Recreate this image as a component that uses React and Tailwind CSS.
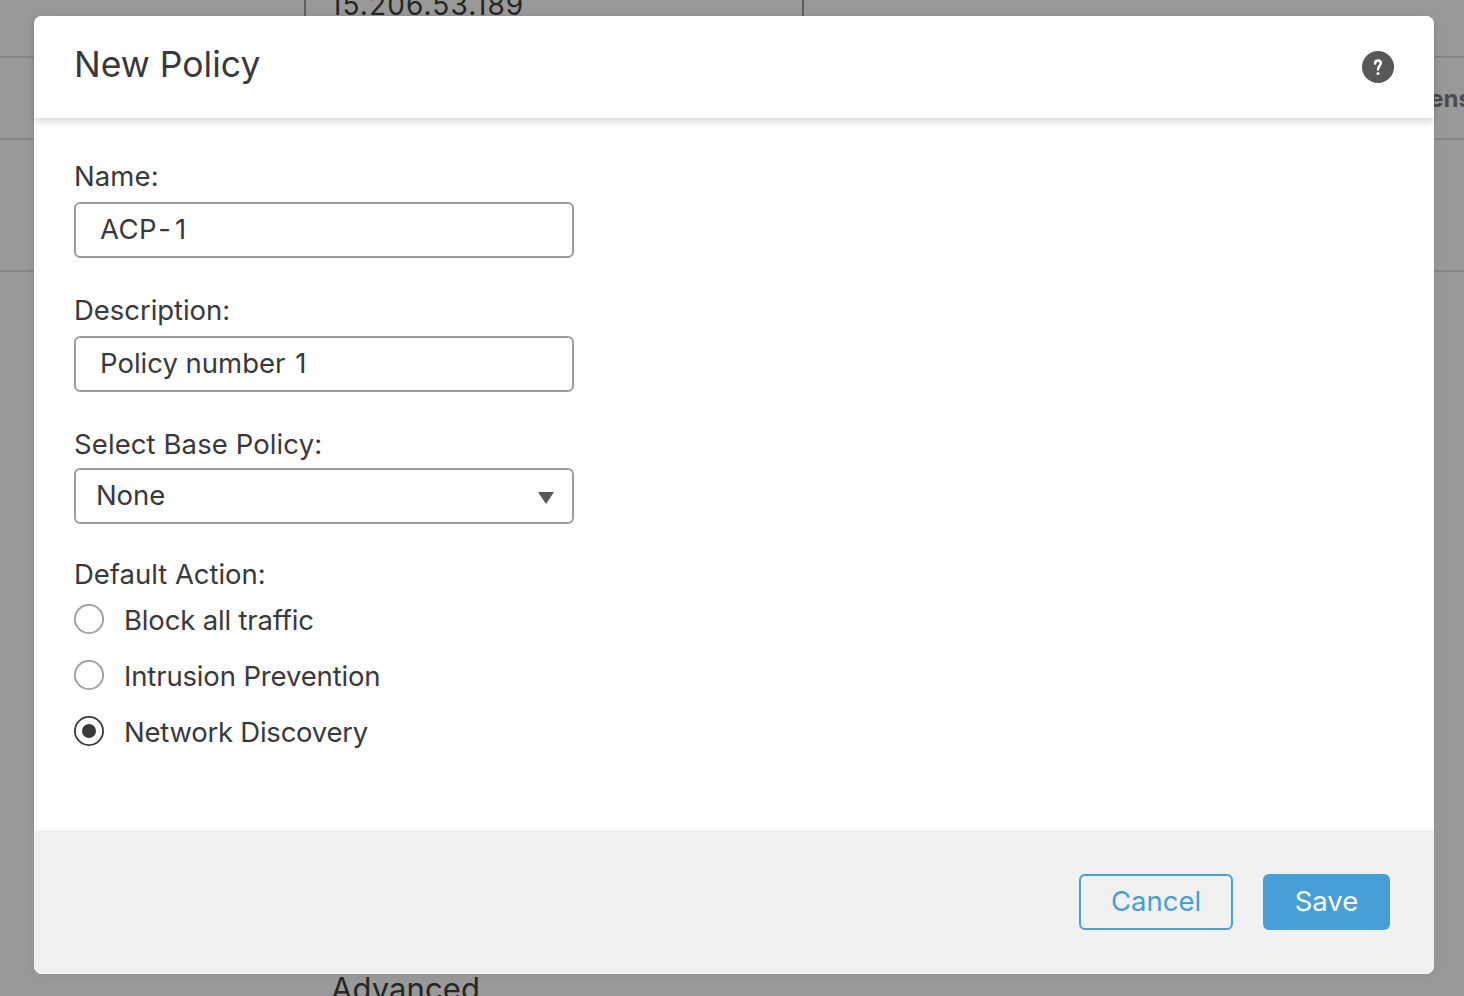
import React, { useState } from 'react';

function HelpIcon() {
  return (
    <svg width="32" height="32" viewBox="0 0 32 32" fill="none" aria-label="Help">
      <circle cx="16" cy="16" r="16" fill="#58585b" />
      <path
        d="M13.1 12.4C13.1 10.4 14.2 9.4 15.9 9.4C17.7 9.4 18.8 10.5 18.8 12.2C18.8 14.6 16 15 16 18.4"
        stroke="#fff"
        strokeWidth="2.5"
        strokeLinecap="round"
      />
      <circle cx="16" cy="22.6" r="1.5" fill="#fff" />
    </svg>
  );
}

function Field({ label, tracking, children }) {
  return (
    <div className="flex flex-col">
      <label className={`h-[34px] leading-[34px] ${tracking}`}>{label}</label>
      {children}
    </div>
  );
}

function TextBox({ children }) {
  return (
    <div className="mt-[9px] flex h-14 w-[500px] items-center rounded-md border-2 border-[#9e9ea2] bg-white pb-[2px] pl-6">
      {children}
    </div>
  );
}

function Radio({ label, tracking, checked, onSelect }) {
  return (
    <button type="button" onClick={onSelect} className="flex h-[34px] items-center gap-5 text-left">
      <svg width="30" height="30" viewBox="0 0 30 30" fill="none" className="-mt-[2px]">
        <circle cx="15" cy="15" r="14.1" stroke={checked ? '#39393b' : '#9e9ea2'} strokeWidth="1.8" />
        {checked && <circle cx="15" cy="15" r="7" fill="#39393b" />}
      </svg>
      <span className={`leading-[34px] ${tracking}`}>{label}</span>
    </button>
  );
}

function Backdrop() {
  return (
    <div className="flex h-full flex-col bg-[#999999] text-[#262626]">
      <div className="h-[58px] border-b-2 border-[#858585] pl-[304px]">
        <div className="-mt-2 flex h-[40px] w-[500px] border-x-2 border-[#5f5f5f] pl-6">
          <span className="-mt-[4px] text-[28px] leading-[34px] tracking-[1.1px]">15.206.53.189</span>
        </div>
      </div>
      <div className="flex h-[82px] items-center justify-end overflow-hidden border-b-2 border-[#858585] pt-[2px]">
        <span className="-mr-[8px] text-[24px] font-bold leading-8 text-[#4c4c4e]">ens</span>
      </div>
      <div className="h-[132px] border-b-2 border-[#858585]" />
      <div className="grow" />
      <div className="h-[26px] overflow-hidden pl-[331px] text-[31px] leading-[37px] tracking-[0.1px]">
        <span>Advanced</span>
      </div>
    </div>
  );
}

export default function App() {
  const [action, setAction] = useState('discovery');
  return (
    <div className="relative h-[996px] w-[1464px] overflow-hidden font-['Inter',sans-serif]">
      <Backdrop />
      <div className="absolute inset-0 flex pb-[22px] pl-[34px] pr-[30px] pt-4">
        <div className="flex w-full flex-col rounded-lg bg-white text-[27.5px] text-[#39393b] shadow-[0_0_12px_rgba(0,0,0,0.06)]">
          <header className="relative flex h-[102px] items-center justify-between rounded-t-lg bg-white px-10 shadow-[0_4px_6px_rgba(0,0,0,0.14)]">
            <h1 className="-mt-1 text-[35.5px] leading-[44px]">New Policy</h1>
            <HelpIcon />
          </header>
          <main className="flex grow flex-col px-10 pt-[41px]">
            <Field label="Name:" tracking="tracking-[0.1px]">
              <TextBox>
                <span className="leading-[34px] tracking-[0.4px]">
                  AC<span className="tracking-[3px]">P-</span><span className="pl-[1px]">1</span>
                </span>
              </TextBox>
            </Field>
            <div className="h-[35px]" />
            <Field label="Description:" tracking="tracking-[-0.05px]">
              <TextBox>
                <span className="leading-[34px]">
                  Policy number <span className="pl-[2px]">1</span>
                </span>
              </TextBox>
            </Field>
            <div className="h-[35px]" />
            <Field label="Select Base Policy:" tracking="tracking-[0.1px]">
              <div className="mt-[7px] flex h-14 w-[500px] items-center justify-between rounded-md border-2 border-[#9e9ea2] bg-white pb-[2px] pl-5 pr-[18px]">
                <span className="leading-[34px] tracking-[-0.1px]">None</span>
                <svg width="16" height="12" viewBox="0 0 16 12" className="mt-[5px]">
                  <path d="M0 0H16L8 12Z" fill="#58585b" />
                </svg>
              </div>
            </Field>
            <div className="h-[33px]" />
            <Field label="Default Action:" tracking="tracking-[-0.03px]">
              <div className="mt-3 flex flex-col gap-[22px]">
                <Radio label="Block all traffic" tracking="tracking-[-0.17px]" checked={action === 'block'} onSelect={() => setAction('block')} />
                <Radio label="Intrusion Prevention" tracking="tracking-[-0.15px]" checked={action === 'intrusion'} onSelect={() => setAction('intrusion')} />
                <Radio label="Network Discovery" tracking="tracking-[-0.24px]" checked={action === 'discovery'} onSelect={() => setAction('discovery')} />
              </div>
            </Field>
          </main>
          <footer className="flex h-36 items-center justify-end gap-[30px] rounded-b-lg bg-[#f1f1f1] pr-11">
            <button type="button" className="h-14 w-[154px] rounded-md border-2 border-[#469fd6] pb-[2px] leading-[50px] text-[#469fd6]">
              Cancel
            </button>
            <button type="button" className="h-14 w-[127px] rounded-md bg-[#469fd6] pb-[2px] leading-[54px] text-white">
              Save
            </button>
          </footer>
        </div>
      </div>
    </div>
  );
}
